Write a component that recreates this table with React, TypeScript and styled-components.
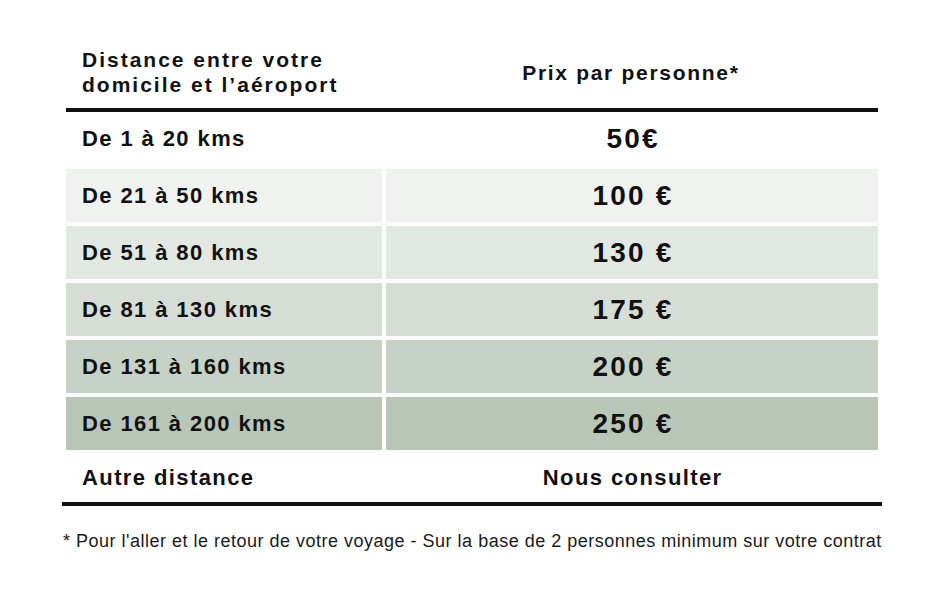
import React from 'react'
import styled, { createGlobalStyle } from 'styled-components'

const GlobalStyle = createGlobalStyle`
  html, body {
    margin: 0;
    padding: 0;
    background: #ffffff;
  }
  body {
    font-family: 'Liberation Sans', Arial, Helvetica, sans-serif;
    color: #111111;
  }
`

const Page = styled.div`
  width: 945px;
  height: 591px;
  box-sizing: border-box;
  padding-top: 40px;
`

const TableWrap = styled.div`
  width: 812px;
  margin-left: 66px;
`

const HeaderRow = styled.div`
  display: grid;
  grid-template-columns: 316px 496px;
  height: 72px;
  box-sizing: border-box;
  padding-bottom: 4px;
  align-items: center;
  border-bottom: 4px solid #111111;
`

const HeaderCell = styled.div<{ center?: boolean }>`
  font-weight: 700;
  font-size: 21px;
  line-height: 25px;
  letter-spacing: ${({ center }) => (center ? '1.7px' : '2px')};
  padding-left: ${({ center }) => (center ? '1.7px' : '16px')};
  text-align: ${({ center }) => (center ? 'center' : 'left')};
`

const Body = styled.div`
  display: flex;
  flex-direction: column;
  gap: 4px;
`

const Row = styled.div<{ height?: number }>`
  display: grid;
  grid-template-columns: 316px 492px;
  column-gap: 4px;
  height: ${({ height }) => height ?? 53}px;
`

const DistCell = styled.div<{ bg: string }>`
  background: ${({ bg }) => bg};
  display: flex;
  align-items: center;
  padding-left: 16px;
  font-weight: 700;
  font-size: 22px;
  letter-spacing: 1.4px;
`

const PriceCell = styled.div<{ bg: string; small?: boolean }>`
  background: ${({ bg }) => bg};
  display: flex;
  align-items: center;
  justify-content: center;
  font-weight: 700;
  font-size: ${({ small }) => (small ? '22px' : '28px')};
  letter-spacing: ${({ small }) => (small ? '1.4px' : '2.2px')};
  padding-left: ${({ small }) => (small ? '1.4px' : '2.2px')};
`

const BottomRule = styled.div`
  width: 820px;
  height: 4px;
  margin-left: 62px;
  background: #111111;
`

const Footnote = styled.p`
  margin: 25px 0 0 63px;
  font-size: 18px;
  letter-spacing: 0.5px;
  color: #1a1a1a;
`

const rows = [
  { dist: 'De 1 à 20 kms', price: '50€', bg: '#ffffff' },
  { dist: 'De 21 à 50 kms', price: '100 €', bg: '#f0f2f0' },
  { dist: 'De 51 à 80 kms', price: '130 €', bg: '#e1e7e1' },
  { dist: 'De 81 à 130 kms', price: '175 €', bg: '#d5ddd4' },
  { dist: 'De 131 à 160 kms', price: '200 €', bg: '#c7d2c6' },
  { dist: 'De 161 à 200 kms', price: '250 €', bg: '#b8c6b7' }
]

export default function App() {
  return (
    <Page>
      <GlobalStyle />
      <TableWrap>
        <HeaderRow>
          <HeaderCell>
            Distance entre votre
            <br />
            domicile et l’aéroport
          </HeaderCell>
          <HeaderCell center>Prix par personne*</HeaderCell>
        </HeaderRow>
        <Body>
          {rows.map(r => (
            <Row key={r.dist}>
              <DistCell bg={r.bg}>{r.dist}</DistCell>
              <PriceCell bg={r.bg}>{r.price}</PriceCell>
            </Row>
          ))}
          <Row height={48}>
            <DistCell bg="#ffffff">Autre distance</DistCell>
            <PriceCell bg="#ffffff" small>
              Nous consulter
            </PriceCell>
          </Row>
        </Body>
      </TableWrap>
      <BottomRule />
      <Footnote>
        * Pour l'aller et le retour de votre voyage - Sur la base de 2 personnes minimum sur votre contrat
      </Footnote>
    </Page>
  )
}
